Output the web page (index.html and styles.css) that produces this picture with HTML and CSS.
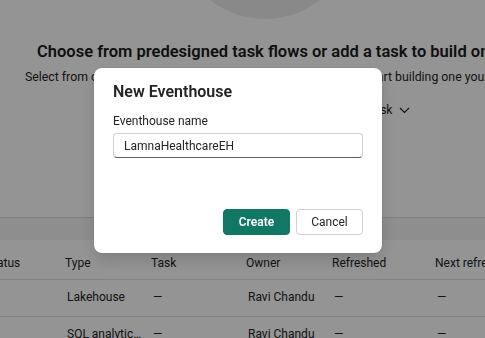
FILE: index.html
```html
<!DOCTYPE html>
<html lang="en">
<head>
    <meta charset="UTF-8">
    <meta name="viewport" content="width=device-width, initial-scale=1.0">
    <title>New Eventhouse</title>
    <link rel="stylesheet" href="styles.css">
</head>
<body>
    <main class="page">
        <section class="hero">
            <div class="hero-art"></div>
            <h2 class="hero-title">Choose from predesigned task flows or add a task to build one</h2>
            <p class="hero-sub">Select from one of the predesigned task flows or add a task to start building one yourself.</p>
            <div class="hero-actions">
                <span class="link-btn">Select a task flow</span>
                <span class="link-btn">Add a task
                    <svg width="11" height="7" viewBox="0 0 11 7"><path d="M1 1l4.5 4.5L10 1" fill="none" stroke="#242424" stroke-width="1.2"/></svg>
                </span>
            </div>
        </section>
        <div class="toolbar"></div>
        <div class="table">
            <div class="row head">
                <span>Status</span><span>Type</span><span>Task</span><span>Owner</span><span>Refreshed</span><span>Next refresh</span>
            </div>
            <div class="row">
                <span></span><span>Lakehouse</span><span>—</span><span>Ravi Chandu</span><span>—</span><span>—</span>
            </div>
            <div class="row">
                <span></span><span>SQL analytics endpoint</span><span>—</span><span>Ravi Chandu</span><span>—</span><span>—</span>
            </div>
        </div>
    </main>

    <div class="overlay">
        <div class="dialog">
            <h3 class="dialog-title">New Eventhouse</h3>
            <label class="field-label" for="eh-name">Eventhouse name</label>
            <input class="field" id="eh-name" type="text" value="LamnaHealthcareEH">
            <div class="dialog-actions">
                <button class="btn primary">Create</button>
                <button class="btn">Cancel</button>
            </div>
        </div>
    </div>
</body>
</html>
```
FILE: styles.css
```css
*{
    margin: 0;
    padding: 0;
    box-sizing: border-box;
}
body{
    width: 485px;
    height: 338px;
    overflow: hidden;
    background-color: #ffffff;
    color: #242424;
    font-family: "Segoe UI", Roboto, "Open Sans", sans-serif;
}
.page{
    width: 485px;
    height: 338px;
    overflow: hidden;
}
.hero{
    display: flow-root;
    height: 218px;
    border-bottom: 1px solid #dcdcdc;
    white-space: nowrap;
}
.hero-art{
    width: 178px;
    height: 178px;
    margin-top: -159px;
    margin-left: 176px;
    border-radius: 50%;
    background-color: #ececec;
}
.hero-title{
    margin-top: 22px;
    margin-left: 37px;
    font-size: 16.5px;
    line-height: 22px;
    font-weight: 600;
    color: #1a1a1a;
}
.hero-sub{
    margin-top: 6px;
    margin-left: 25px;
    font-size: 12.3px;
    line-height: 16px;
}
.hero-actions{
    margin-top: 17px;
    margin-left: 222px;
    display: flex;
    gap: 20px;
    font-size: 12px;
    line-height: 16px;
}
.link-btn{
    display: flex;
    align-items: center;
    gap: 7px;
}
.toolbar{
    height: 22px;
    background-color: #f4f4f4;
}
.table{
    margin-left: -12px;
    font-size: 12px;
    line-height: 16px;
}
.row{
    display: grid;
    grid-template-columns: 79px 86px 95px 86px 103px 100px;
    height: 37px;
    padding-top: 9px;
    border-bottom: 1px solid #e0e0e0;
    white-space: nowrap;
}
.row span{
    overflow: hidden;
    text-overflow: ellipsis;
    padding-right: 10px;
}
.row.head{
    height: 40px;
    padding-top: 15px;
}
.row.head span{
    margin-left: -2px;
}
.overlay{
    position: fixed;
    inset: 0;
    background-color: rgba(0, 0, 0, 0.42);
}
.dialog{
    position: absolute;
    left: 94px;
    top: 68px;
    width: 288px;
    height: 185px;
    padding: 13px 19px 18px;
    border-radius: 8px;
    background-color: #ffffff;
    box-shadow: 0 8px 16px rgba(0, 0, 0, 0.14), 0 0 2px rgba(0, 0, 0, 0.12);
    display: flex;
    flex-direction: column;
}
.dialog-title{
    font-size: 16px;
    line-height: 22px;
    font-weight: 600;
}
.field-label{
    margin-top: 10px;
    font-size: 12px;
    line-height: 16px;
}
.field{
    margin-top: 4px;
    height: 25px;
    width: 250px;
    padding: 0 10px;
    border: 1px solid #d1d1d1;
    border-bottom-color: #616161;
    border-radius: 4px;
    font-family: inherit;
    font-size: 12px;
    color: #242424;
    outline: none;
}
.dialog-actions{
    margin-top: auto;
    display: flex;
    justify-content: flex-end;
    gap: 6px;
}
.btn{
    width: 67px;
    height: 26px;
    border: 1px solid #d1d1d1;
    border-radius: 4px;
    background-color: #ffffff;
    color: #242424;
    font-family: inherit;
    font-size: 12px;
    cursor: pointer;
}
.btn.primary{
    border-color: #117865;
    background-color: #117865;
    color: #ffffff;
    font-weight: 600;
}
```
